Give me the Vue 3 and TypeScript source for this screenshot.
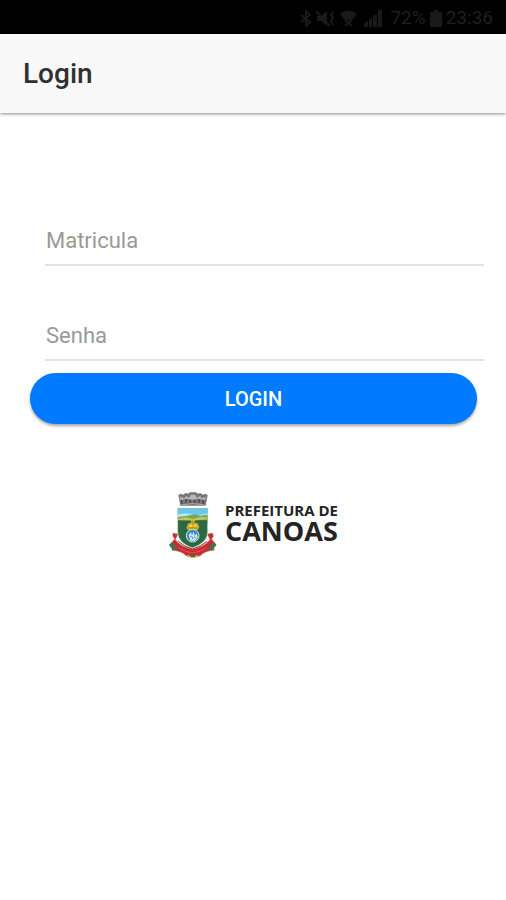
<script setup lang="ts">
import { ref } from 'vue'

const matricula = ref('')
const senha = ref('')
const battery = ref('72%')
const clock = ref('23:36')
</script>

<template>
  <div class="page">
    <div class="status">
      <svg class="bluetooth" width="12" height="17" viewBox="0 0 12 17" aria-hidden="true">
        <path d="M1 5l9 7-4 4V1l4 4-9 7" />
      </svg>
      <svg class="muted" width="20" height="17" viewBox="0 0 20 17" aria-hidden="true">
        <path class="solid" d="M1 6h4l6-5v15l-6-5H1z" />
        <path d="M0 1l14 15" />
        <path d="M17 2l-2 3 2 3-2 3 2 4" />
      </svg>
      <svg class="wifi" width="17" height="17" viewBox="0 0 17 17" aria-hidden="true">
        <path class="solid" d="M0 4q8.500-7 17 0l-5 6H5z" />
        <path d="M5 16l7-6M12 16l-7-6" />
      </svg>
      <svg class="signal" width="18" height="17" viewBox="0 0 18 17" aria-hidden="true">
        <path class="solid" d="M0 17v-3l4-3v6zM5 17v-7l3-2v9zM9 17V6l4-2v13zM14 17V0h4v17z" />
      </svg>
      <span>{{ battery }}</span>
      <svg class="battery" width="12" height="17" viewBox="0 0 12 17" aria-hidden="true">
        <path class="solid" d="M4 0h4v2h4v15H0V2h4z" />
      </svg>
      <span class="clock">{{ clock }}</span>
    </div>

    <header class="toolbar">
      <h1>Login</h1>
    </header>

    <main>
      <form @submit.prevent>
        <div class="fields">
          <input v-model="matricula" type="text" placeholder="Matricula" aria-label="Matricula" autocomplete="username" />
          <input v-model="senha" type="password" placeholder="Senha" aria-label="Senha" autocomplete="current-password" />
        </div>
        <button type="submit">LOGIN</button>
      </form>

      <div class="brand">
        <svg class="crest" width="50" height="67" viewBox="24 21 150 201" aria-hidden="true">
          <!-- mural crown -->
          <path fill="#777575" d="M55 30l8-4 6 3 8-5 8 2 4-4h20l4 4 8-2 8 5 6-3 8 4-6 32H61z" />
          <path fill="#b9b7b7" d="M59 35l15 5 4-8 9 7 6-10h12l6 10 9-7 5 8 13-5-3 10-20-4-17 3-17-3-20 4z" />
          <path fill="none" stroke="#454344" stroke-width="4" d="M65 46v11M78 43v10M91 45v10M104 45v10M117 43v10M130 46v11" />
          <path fill="none" stroke="#c4c2c2" stroke-width="2" d="M64 60q35-9 70 0" />
          <!-- ribbon -->
          <path fill="#c92c32" stroke="#b08a60" stroke-width="1" d="M39 144l15 3-8 17q16 21 51 29 36-8 53-29l-8-17 15-3 4 9-6 9 14 17-10 6 4 11q-29 2-42 16-22 9-43 0-13-14-43-16l4-11-10-6 15-17-6-9z" />
          <path fill="#397550" d="M27 180l9-8 10 14 10 4-4 5-16-3zM169 180l-9-8-10 14-10 4 4 5 16-3z" />
          <path fill="none" stroke="#ddbca3" stroke-width="2" stroke-dasharray="4 4" d="M57 187q40 31 82 0" />
          <path fill="none" stroke="#8d242a" stroke-width="3" d="M55 169q18 17 42 23 25-6 44-23" />
          <path fill="#d8ad42" d="M80 209q18 6 36 0l-3 6q-15 6-30 0z" />
          <path fill="#397550" d="M89 210h18l-3 6H92z" />
          <!-- shield -->
          <path fill="#2b6844" stroke="#d9ddc4" stroke-width="2" d="M53 70h90v71q0 32-46 48-44-16-44-48z" />
          <path fill="#68c7ed" d="M54 71h88v26H54z" />
          <path fill="#b8e8f4" d="M54 88q25-5 43 0t45-3v13H54z" />
          <path fill="#73aa55" d="M54 96l24-3 24-5 20 4 20-3v17H54z" />
          <path fill="#c4c65a" d="M54 101l24-4 20 5 25-7 19 3v5l-45 4-43-1z" />
          <path fill="#2b6844" d="M54 107h88v7H54z" />
          <!-- emblem -->
          <path fill="#d6ac20" d="M92 105h14l-3 8 10 2 5 12-5 8H83l-4-7 6-13 9-2z" />
          <path fill="#f4d94e" d="M90 119h17l5 6H85z" />
          <path fill="none" stroke="#8d781e" stroke-width="2" d="M86 129h26M99 108v19" />
          <circle cx="98" cy="152" r="19" fill="#338bc1" stroke="#dbe9e8" stroke-width="3" />
          <path fill="#cfe9f3" d="M86 150l7-9 3 10 5-12 3 14 6-8 3 12-8 10H91z" />
          <path fill="none" stroke="#3182b8" stroke-width="2" d="M90 156l5-3 4 9 5-7 5 4" />
        </svg>
        <div class="wordmark">
          <span class="small">PREFEITURA DE</span>
          <span class="large">CANOAS</span>
        </div>
      </div>
    </main>
  </div>
</template>

<style>
body {
  margin: 0;
  background: #fff;
}
</style>

<style scoped>
.page {
  min-height: 100vh;
  font-family: Roboto, "Liberation Sans", sans-serif;
  background: #fff;
}

.status {
  display: flex;
  align-items: center;
  justify-content: flex-end;
  gap: 4px;
  box-sizing: border-box;
  height: 34px;
  padding: 2px 13px 0 0;
  background: #000;
  color: #1f1f1f;
  font-size: 19px;
  line-height: 24px;
}

.status svg {
  flex: none;
  fill: none;
  stroke: #1a1a1a;
  stroke-width: 2;
}

.status .solid {
  fill: #1a1a1a;
  stroke: none;
}

.status .wifi,
.status .signal {
  margin-right: 4px;
}

.status .signal {
  margin-left: -1px;
}

.toolbar {
  display: flex;
  align-items: center;
  box-sizing: border-box;
  height: 79px;
  padding: 0 23px;
  background: #f8f8f8;
  box-shadow: 0 1px 3px rgba(0, 0, 0, 0.45);
}

h1 {
  margin: 0;
  color: #303030;
  font-size: 28px;
  font-weight: 500;
  line-height: 36px;
}

form {
  padding: 103px 29px 0 30px;
}

.fields {
  display: grid;
  gap: 45px;
  margin: 0 -7px 12px 15px;
}

input {
  box-sizing: border-box;
  width: 100%;
  height: 50px;
  padding: 0 0 0 1px;
  border: 0;
  border-bottom: 2px solid #e3e3e3;
  border-radius: 0;
  outline: 0;
  background: transparent;
  color: #303030;
  font-family: inherit;
  font-size: 22px;
}

input::placeholder {
  color: #999;
  opacity: 1;
}

button {
  display: block;
  width: 100%;
  height: 51px;
  padding: 0;
  border: 0;
  border-radius: 26px;
  background: #007bff;
  box-shadow: 0 2px 3px rgba(0, 0, 0, 0.35);
  color: #fff;
  font-family: inherit;
  font-size: 20px;
  font-weight: 500;
  line-height: 24px;
  cursor: pointer;
}

.brand {
  display: flex;
  justify-content: center;
  gap: 7px;
  padding-top: 68px;
}

.crest {
  flex: none;
}

.wordmark {
  display: flex;
  flex-direction: column;
  padding-top: 10px;
  color: #252324;
  font-family: "Open Sans", "Noto Sans", sans-serif;
  font-weight: 700;
}

.small {
  font-size: 15px;
  line-height: 16px;
}

.large {
  font-size: 27px;
  line-height: 26px;
}
</style>
